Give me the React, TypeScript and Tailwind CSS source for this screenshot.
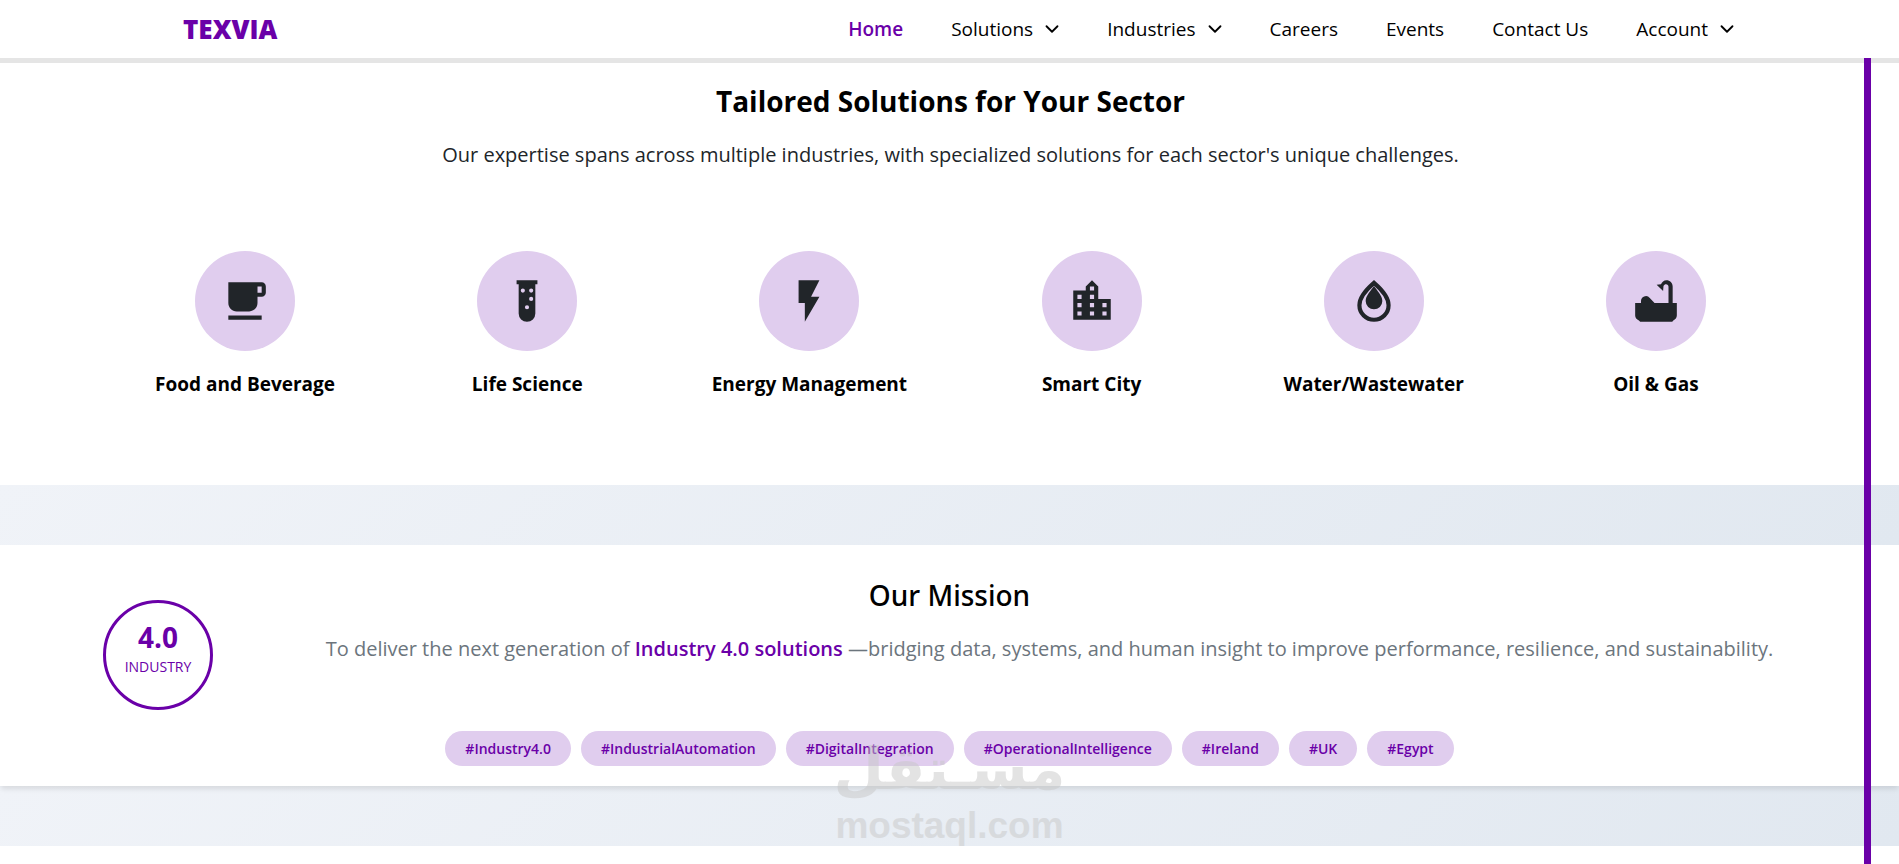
import { ReactNode } from 'react';
import { ChevronDown } from 'lucide-react';
import { MdFlashOn, MdFreeBreakfast, MdLocationCity } from 'react-icons/md';

interface NavItem {
  label: string;
  menu?: boolean;
  active?: boolean;
}

const navItems: NavItem[] = [
  { label: 'Home', active: true },
  { label: 'Solutions', menu: true },
  { label: 'Industries', menu: true },
  { label: 'Careers' },
  { label: 'Events' },
  { label: 'Contact Us' },
  { label: 'Account', menu: true },
];

const tags = [
  '#Industry4.0',
  '#IndustrialAutomation',
  '#DigitalIntegration',
  '#OperationalIntelligence',
  '#Ireland',
  '#UK',
  '#Egypt',
];

function TestTubeIcon() {
  return (
    <svg viewBox="0 0 24 24" width="50" height="50" fill="currentColor" fillRule="evenodd" aria-hidden="true">
      <path d="M7 2h10v2h-1v14a4 4 0 0 1-8 0V4H7V2zm3 4a1 1 0 1 0 0 2 1 1 0 0 0 0-2zm4 0a1 1 0 1 0 0 2 1 1 0 0 0 0-2zm0 4a1 1 0 1 0 0 2 1 1 0 0 0 0-2zm-2 4a1 1 0 1 0 0 2 1 1 0 0 0 0-2z" />
    </svg>
  );
}

function DropIcon() {
  return (
    <svg viewBox="0 0 24 24" width="50" height="50" fill="currentColor" aria-hidden="true">
      <path
        d="M12 3.3C9 5.9 5 10 5 14a7 7 0 0 0 14 0c0-4-4-8.1-7-10.7z"
        fill="none"
        stroke="currentColor"
        strokeWidth="2"
      />
      <path d="M12 4.8C10.5 7 8 9.5 8 12a4 4 0 0 0 8 0c0-2.5-2.5-5-4-7.2z" />
    </svg>
  );
}

function BathIcon() {
  return (
    <svg viewBox="0 0 24 24" width="50" height="50" fill="currentColor" aria-hidden="true">
      <path d="M2 13h2.8v-.8a2.4 2.4 0 0 1 4.2-1.7L11.3 13H18V5.2c0-.7-.5-1.2-1.2-1.2-.5 0-.9.3-1.2.8l-.2 2.4-3.1-3 2.1-.2C14.9 2.8 15.7 2 17 2c1.7 0 3 1.3 3 3v8h2v6c0 1.100-.7 1.900-1.700 2.300L19.800 22H4.400l-.6-.7C2.700 20.900 2 20.100 2 19v-6z" />
    </svg>
  );
}

const sectors: { name: string; icon: ReactNode }[] = [
  { name: 'Food and Beverage', icon: <MdFreeBreakfast size={50} /> },
  { name: 'Life Science', icon: <TestTubeIcon /> },
  { name: 'Energy Management', icon: <MdFlashOn size={50} /> },
  { name: 'Smart City', icon: <MdLocationCity size={50} /> },
  { name: 'Water/Wastewater', icon: <DropIcon /> },
  { name: 'Oil & Gas', icon: <BathIcon /> },
];

function Navbar() {
  return (
    <header className="border-b-[5px] border-[#e5e5e5] bg-white">
      <div className="flex h-[58px] items-center justify-between pr-[165px] pl-[183px]">
        <a href="#home" className="text-[26px] font-extrabold text-[#6a00a8]">
          TEXVIA
        </a>
        <nav className="flex items-center gap-12 text-[19px]">
          {navItems.map(item =>
            item.menu ? (
              <button key={item.label} type="button" className="flex items-center gap-2">
                {item.label}
                <ChevronDown size={22} className="-mr-1" />
              </button>
            ) : (
              <a
                key={item.label}
                href="#"
                className={item.active ? 'font-semibold text-[#6a00a8]' : ''}
              >
                {item.label}
              </a>
            )
          )}
        </nav>
      </div>
    </header>
  );
}

function Sectors() {
  return (
    <section className="pt-4 pr-[102px] pb-[88px] pl-[104px] text-center">
      <h2 className="text-[28px] leading-[44px] font-bold">Tailored Solutions for Your Sector</h2>
      <p className="mt-4 text-[20px] leading-8 text-[#212529]">
        Our expertise spans across multiple industries, with specialized solutions for each sector's unique challenges.
      </p>
      <ul className="mt-20 grid grid-cols-6">
        {sectors.map(sector => (
          <li key={sector.name} className="flex flex-col items-center">
            <div className="flex size-[100px] items-center justify-center rounded-full bg-[#e0cdee] text-[#212529]">
              {sector.icon}
            </div>
            <h3 className="mt-5 text-[19px] leading-[26px] font-bold">{sector.name}</h3>
          </li>
        ))}
      </ul>
    </section>
  );
}

function Mission() {
  return (
    <section className="relative bg-white px-[103px] pt-8 pb-5 shadow-[0_4px_5px_-1px_rgba(0,0,0,0.1)]">
      <h2 className="text-center font-['Noto_Sans',sans-serif] text-[28px] leading-9 font-medium">Our Mission</h2>
      <div className="flex">
        <div className="-mt-[13px] flex size-[110px] shrink-0 flex-col items-center rounded-full border-3 border-[#6a00a8] pt-4 text-[#6a00a8]">
          <span className="text-[28px] leading-9 font-bold">4.0</span>
          <span className="text-[14px] leading-6">INDUSTRY</span>
        </div>
        <p className="mt-5 flex-1 pl-[90px] text-center text-[20px] leading-8 text-[#6c757d]">
          To deliver the next generation of{' '}
          <strong className="font-semibold text-[#6a00a8]">Industry 4.0 solutions</strong> —bridging data, systems, and
          human insight to improve performance, resilience, and sustainability.
        </p>
      </div>
      <ul className="mt-[21px] flex flex-wrap justify-center gap-[10px]">
        {tags.map(tag => (
          <li
            key={tag}
            className="rounded-full bg-[#e0cdee] px-5 text-[14px] leading-[35px] font-semibold text-[#6a00a8]"
          >
            {tag}
          </li>
        ))}
      </ul>
    </section>
  );
}

function Watermark() {
  return (
    <div className="pointer-events-none absolute top-[732px] left-1/2 flex -translate-x-1/2 flex-col items-center font-bold text-[#c8c8c8] opacity-50">
      <span lang="ar" dir="rtl" className="font-['DejaVu_Sans',sans-serif] text-[58px] leading-[74px]">
        مسـتقل
      </span>
      <span className="font-['Liberation_Sans',sans-serif] text-[37px] leading-10">mostaql.com</span>
    </div>
  );
}

export default function App() {
  return (
    <div className="relative bg-white font-['Open_Sans','Noto_Sans',sans-serif] text-black">
      <Navbar />
      <main>
        <Sectors />
        <div className="h-[60px] bg-linear-135 from-[#f0f3f8] to-[#e1e8f0]" />
        <Mission />
        <div className="h-[60px] bg-linear-135 from-[#f0f3f8] to-[#e1e8f0]" />
      </main>
      <div className="fixed top-[58px] right-7 bottom-0 w-[7px] bg-[#6a00a8]" />
      <Watermark />
    </div>
  );
}
